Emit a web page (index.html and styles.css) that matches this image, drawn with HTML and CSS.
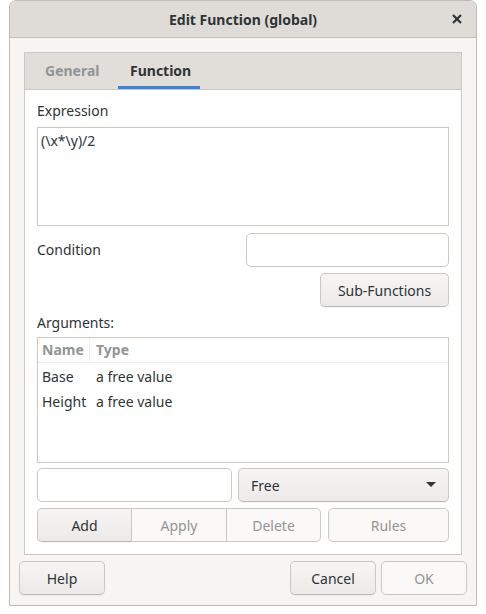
FILE: index.html
```html
<!DOCTYPE html>
<html>
<head>
<meta charset="utf-8">
<link rel="stylesheet" href="styles.css">
</head>
<body>
<div class="window">
  <div class="titlebar">
    <span class="title">Edit Function (global)</span>
    <span class="close"><svg width="10" height="10" viewBox="0 0 10 10"><path d="M1 1L9 9M9 1L1 9" stroke="#2e3436" stroke-width="2.2"/></svg></span>
  </div>
  <div class="body">
    <div class="notebook">
      <div class="tabs">
        <div class="tab">General</div>
        <div class="tab active">Function</div>
      </div>
      <div class="page">
        <div class="label">Expression</div>
        <div class="textarea">(\x*\y)/2</div>
        <div class="cond-row">
          <div class="label">Condition</div>
          <div class="entry cond"></div>
        </div>
        <div class="right-row">
          <div class="btn subfn">Sub-Functions</div>
        </div>
        <div class="label args">Arguments:</div>
        <div class="tree">
          <div class="thead">
            <div class="th c1">Name</div>
            <div class="th c2">Type</div>
          </div>
          <div class="tr"><div class="td c1">Base</div><div class="td c2">a free value</div></div>
          <div class="tr"><div class="td c1">Height</div><div class="td c2">a free value</div></div>
        </div>
        <div class="edit-row">
          <div class="entry name"></div>
          <div class="btn combo"><span>Free</span><svg width="10" height="6" viewBox="0 0 10 6"><path d="M0 0H10L5 5Z" fill="#2e3436"/></svg></div>
        </div>
        <div class="action-row">
          <div class="linked">
            <div class="btn lb">Add</div>
            <div class="btn lb dis">Apply</div>
            <div class="btn lb dis">Delete</div>
          </div>
          <div class="btn dis rules">Rules</div>
        </div>
      </div>
    </div>
    <div class="dialog-row">
      <div class="btn dlg">Help</div>
      <div class="spacer"></div>
      <div class="btn dlg">Cancel</div>
      <div class="btn dlg dis">OK</div>
    </div>
  </div>
</div>
</body>
</html>
```
FILE: styles.css
```css
html, body { margin: 0; padding: 0; background: #ffffff; }
body { font-family: "Noto Sans", "Open Sans", sans-serif; font-size: 14px; color: #2e3436; }
.window {
  margin-left: 9px;
  width: 468px;
  height: 606px;
  border: 1px solid #c0bbb6;
  border-radius: 7px 7px 0 0;
  background: #f6f5f4;
  overflow: hidden;
  box-sizing: border-box;
  display: flex;
  flex-direction: column;
}
.titlebar {
  height: 37px;
  box-sizing: border-box;
  background: #dfdcd8;
  border-bottom: 1px solid #c4bfba;
  display: flex;
  align-items: center;
  justify-content: center;
  position: relative;
}
.title { font-weight: bold; font-size: 14px; color: #2e3436; }
.close { position: absolute; right: 14px; top: 13px; height: 10px; }
.close svg { display: block; }
.body { padding: 14px 14px 0 14px; display: flex; flex-direction: column; }
.notebook {
  border: 1px solid #cdc7c2;
  background: #ffffff;
}
.tabs {
  height: 36px;
  background: #e1ddd9;
  border-bottom: 1px solid #cdc7c2;
  display: flex;
  padding-left: 8px;
}
.tab {
  padding: 0 12px;
  line-height: 36px;
  font-weight: bold;
  color: #929595;
  width: 58px;
  text-align: center;
}
.tab:first-child { width: 53px; margin-right: 8px; }
.tab.active { color: #2e3436; box-shadow: inset 0 -3px 0 #3584e4; }
.page { padding: 11px 12px 12px 12px; display: flex; flex-direction: column; }
.label { line-height: 20px; }
.textarea {
  margin-top: 6px;
  height: 99px;
  border: 1px solid #cdc7c2;
  box-sizing: border-box;
  padding: 3px 3px;
  line-height: 20px;
}
.cond-row { display: flex; justify-content: space-between; align-items: center; margin-top: 7px; }
.entry {
  height: 34px;
  box-sizing: border-box;
  border: 1px solid #cdc7c2;
  border-radius: 5px;
  background: #ffffff;
}
.cond { width: 203px; }
.right-row { display: flex; justify-content: flex-end; margin-top: 6px; }
.btn {
  height: 34px;
  box-sizing: border-box;
  border: 1px solid #cdc7c2;
  border-bottom-color: #bfb8b1;
  border-radius: 5px;
  background: linear-gradient(to top, #edebe9 2px, #f6f5f4);
  box-shadow: 0 1px rgba(0,0,0,0.04);
  display: flex;
  align-items: center;
  justify-content: center;
  color: #2e3436;
}
.subfn { width: 129px; }
.args { margin-top: 6px; }
.tree {
  margin-top: 4px;
  height: 126px;
  box-sizing: border-box;
  border: 1px solid #cdc7c2;
}
.thead { display: flex; height: 24px; border-bottom: 1px solid #eeedec; }
.th { font-weight: bold; color: #929595; line-height: 24px; }
.thead .c1 { border-right: 1px solid #eeedec; }
.c1 { width: 52px; padding-left: 4px; box-sizing: border-box; }
.c2 { padding-left: 6px; }
.tr { display: flex; height: 25px; line-height: 25px; }
.thead + .tr { margin-top: 1px; }
.edit-row { display: flex; justify-content: space-between; margin-top: 5px; }
.name { width: 195px; }
.combo { width: 211px; justify-content: space-between; padding: 0 12px; }
.combo svg { display: block; }
.action-row { display: flex; justify-content: space-between; margin-top: 6px; }
.linked { display: flex; }
.lb { width: 95px; border-radius: 0; }
.lb:first-child { border-radius: 5px 0 0 5px; }
.lb:last-child { border-radius: 0 5px 5px 0; width: 94px; }
.lb + .lb { border-left: none; }
.dis { background: #faf9f8; color: #929595; border-bottom-color: #cdc7c2; box-shadow: none; }
.rules { width: 121px; }
.dialog-row { display: flex; margin: 6px -5px 0 -5px; gap: 5px; }
.dlg { width: 86px; }
.spacer { flex: 1; }
```
